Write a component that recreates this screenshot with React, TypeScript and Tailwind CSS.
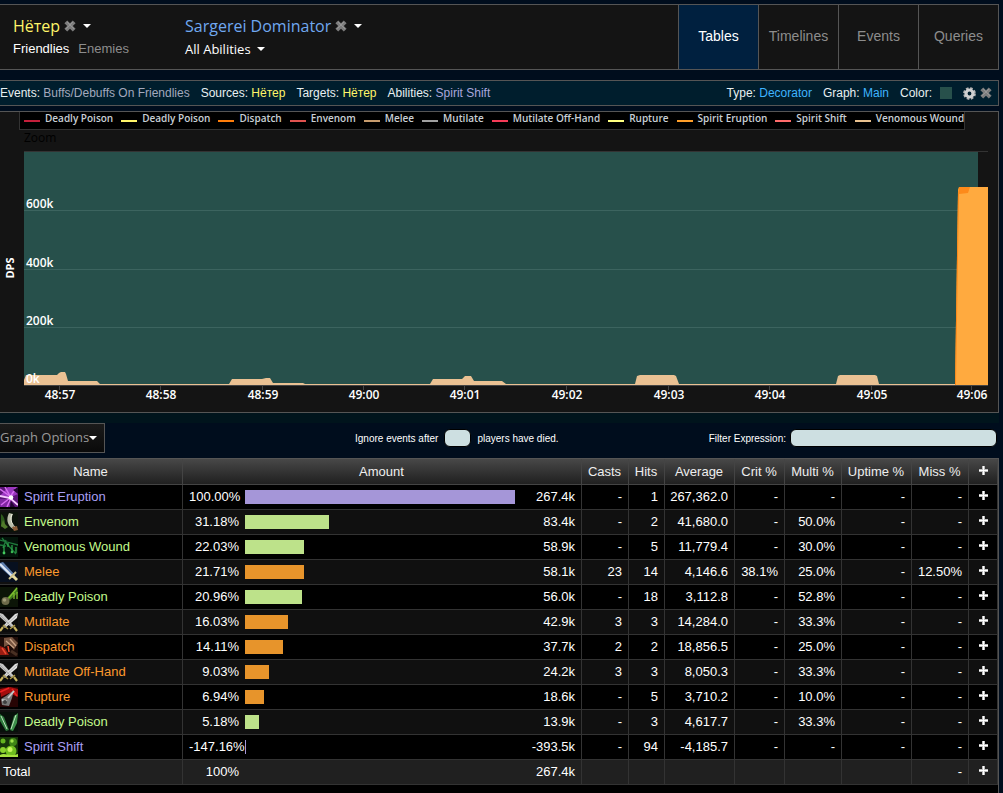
import type { ReactNode } from "react";
import clsx from "clsx";

type School = "shadow" | "nature" | "physical";

type AbilityRow = {
  name: string;
  icon: string;
  school: School;
  percent: string;
  share: number;
  amount: string;
  stats: string[];
};

const rows: AbilityRow[] = [
  { name: "Spirit Eruption", icon: "eruption", school: "shadow", percent: "100.00%", share: 100, amount: "267.4k", stats: ["-", "1", "267,362.0", "-", "-", "-", "-"] },
  { name: "Envenom", icon: "envenom", school: "nature", percent: "31.18%", share: 31.18, amount: "83.4k", stats: ["-", "2", "41,680.0", "-", "50.0%", "-", "-"] },
  { name: "Venomous Wound", icon: "wound", school: "nature", percent: "22.03%", share: 22.03, amount: "58.9k", stats: ["-", "5", "11,779.4", "-", "30.0%", "-", "-"] },
  { name: "Melee", icon: "melee", school: "physical", percent: "21.71%", share: 21.71, amount: "58.1k", stats: ["23", "14", "4,146.6", "38.1%", "25.0%", "-", "12.50%"] },
  { name: "Deadly Poison", icon: "poison", school: "nature", percent: "20.96%", share: 20.96, amount: "56.0k", stats: ["-", "18", "3,112.8", "-", "52.8%", "-", "-"] },
  { name: "Mutilate", icon: "blades", school: "physical", percent: "16.03%", share: 16.03, amount: "42.9k", stats: ["3", "3", "14,284.0", "-", "33.3%", "-", "-"] },
  { name: "Dispatch", icon: "dispatch", school: "physical", percent: "14.11%", share: 14.11, amount: "37.7k", stats: ["2", "2", "18,856.5", "-", "25.0%", "-", "-"] },
  { name: "Mutilate Off-Hand", icon: "blades", school: "physical", percent: "9.03%", share: 9.03, amount: "24.2k", stats: ["3", "3", "8,050.3", "-", "33.3%", "-", "-"] },
  { name: "Rupture", icon: "rupture", school: "physical", percent: "6.94%", share: 6.94, amount: "18.6k", stats: ["-", "5", "3,710.2", "-", "10.0%", "-", "-"] },
  { name: "Deadly Poison", icon: "daggers", school: "nature", percent: "5.18%", share: 5.18, amount: "13.9k", stats: ["-", "3", "4,617.7", "-", "33.3%", "-", "-"] },
  { name: "Spirit Shift", icon: "shift", school: "shadow", percent: "-147.16%", share: 0, amount: "-393.5k", stats: ["-", "94", "-4,185.7", "-", "-", "-", "-"] },
];

const totals = ["", "", "", "", "", "", "-"];

const textColor: Record<School, string> = {
  shadow: "text-[#a99ff4]",
  nature: "text-[#c3fa8c]",
  physical: "text-[#fb992e]",
};

const barColor: Record<School, string> = {
  shadow: "bg-[#a596d8]",
  nature: "bg-[#bde28a]",
  physical: "bg-[#e7942b]",
};

const legend = [
  { name: "Deadly Poison", color: "bg-[#c41f3b]" },
  { name: "Deadly Poison", color: "bg-[#fff569]" },
  { name: "Dispatch", color: "bg-[#ff7d0a]" },
  { name: "Envenom", color: "bg-[#e0524f]" },
  { name: "Melee", color: "bg-[#c79c6e]" },
  { name: "Mutilate", color: "bg-[#a0a0a0]" },
  { name: "Mutilate Off-Hand", color: "bg-[#f53b57]" },
  { name: "Rupture", color: "bg-[#ffff80]" },
  { name: "Spirit Eruption", color: "bg-[#ff9f2a]" },
  { name: "Spirit Shift", color: "bg-[#ff6b6b]" },
  { name: "Venomous Wound", color: "bg-[#eac18f]" },
];

const timeTicks = [
  { x: 60, label: "48:57" },
  { x: 161, label: "48:58" },
  { x: 263, label: "48:59" },
  { x: 364, label: "49:00" },
  { x: 465, label: "49:01" },
  { x: 567, label: "49:02" },
  { x: 669, label: "49:03" },
  { x: 770, label: "49:04" },
  { x: 872, label: "49:05" },
  { x: 972, label: "49:06" },
];

const valueTicks = [
  { y: 78, label: "600k" },
  { y: 137, label: "400k" },
  { y: 195, label: "200k" },
  { y: 253, label: "0k" },
];

const tabs = ["Tables", "Timelines", "Events", "Queries"];

function CloseIcon() {
  return (
    <svg width="12" height="12" viewBox="0 0 12 12" className="block">
      <path d="M3.2.4 6 3.2 8.800.4 11.600 3.200 8.800 6l2.800 2.800-2.800 2.800L6 8.800l-2.800 2.800L.4 8.800 3.200 6 .4 3.200z" fill="#7d7d7d" />
      <path d="M3.200 2 10 8.800M8.800 2 2 8.800" stroke="#9b9b9b" strokeWidth="1" />
    </svg>
  );
}

function GearIcon() {
  return (
    <svg width="13" height="13" viewBox="0 0 13 13" className="block">
      <circle cx="6.5" cy="6.5" r="5.200" fill="none" stroke="#b4b4b4" strokeWidth="2.400" strokeDasharray="2.500 1.584" />
      <circle cx="6.5" cy="6.5" r="3.500" fill="none" stroke="#cfcfcf" strokeWidth="3.200" />
    </svg>
  );
}

function Caret() {
  return (
    <svg width="8" height="4" viewBox="0 0 8 4" className="block">
      <path d="M0 0h8L4 4z" fill="#fff" />
    </svg>
  );
}

function PlusIcon() {
  return (
    <svg width="9" height="9" viewBox="0 0 9 9" className="block">
      <path d="M3 0h3v3h3v3H6v3H3V6H0V3h3z" fill="#bdbdbd" />
      <path d="M4 0h1v4h4v1H5v4H4V5H0V4h4z" fill="#fff" />
    </svg>
  );
}

const art: Record<string, ReactNode> = {
  eruption: (
    <>
      <rect width="18" height="20" fill="#5c1478" />
      <path d="M0 9 8 0h10v7L9 11z" fill="#9b37c0" />
      <path d="M0 12l7 0 4 8H0z" fill="#8026a2" />
      <path d="M0 2l11 8M5 0l5 9M16 1l-6 9M1 18l9-7M7 20l4-9" stroke="#d66cf0" strokeWidth="1.500" />
      <path d="M0 9l10 2 8 7" stroke="#f7c9ff" strokeWidth="1.800" fill="none" />
      <circle cx="11" cy="10.500" r="2.300" fill="#fff" />
      <path d="M13 3l5-3v7zM11 14l4 6h-5z" fill="#240434" />
    </>
  ),
  envenom: (
    <>
      <rect width="18" height="20" fill="#0b120a" />
      <path d="M1 2c3 2 4 6 4 10l-4 3z" fill="#2c5a1c" />
      <path d="M9 1C6 7 7 13 13 17l2-1C11 11 11 6 13 2z" fill="#b9bda9" />
      <path d="M12 2c-2 5-1 9 3 13" stroke="#efefdf" fill="none" />
      <path d="M3 8l2 4 3 3-3 2-4-3z" fill="#507a2b" />
      <path d="M12 15l5-1 1 4-4 1z" fill="#8a5b37" />
    </>
  ),
  wound: (
    <>
      <rect width="18" height="20" fill="#03140a" />
      <path d="M0 3l7 2 11 3M2 1l5 6 9 10M0 8l6 1M6 3l-3 8" stroke="#1f7a3b" strokeWidth="1.300" fill="none" />
      <path d="M4 9v7M12 8v7M8 6v4M16 10v6" stroke="#2fae4e" strokeWidth="1.200" />
      <circle cx="4" cy="16" r="1.400" fill="#45cc60" />
      <circle cx="12" cy="15" r="1.300" fill="#3ab552" />
    </>
  ),
  melee: (
    <>
      <rect width="18" height="20" fill="#07101f" />
      <path d="M0 1l3-1 12 13-3 3L0 5z" fill="#5f7fae" />
      <path d="M0 2l13 13" stroke="#dfe9f5" strokeWidth="2" />
      <path d="M9 17l7-7" stroke="#cfc38d" strokeWidth="2" />
      <path d="M13 14l4 4" stroke="#e7dc9e" strokeWidth="3" />
    </>
  ),
  poison: (
    <>
      <rect width="18" height="20" fill="#0c1507" />
      <path d="M17 0 7 11l3 2 8-7z" fill="#3f7a1c" />
      <path d="M17 1 8 12M14 6v6M17 5v7" stroke="#7dbb2f" strokeWidth="1.300" />
      <circle cx="5.500" cy="14" r="4" fill="#6d6a4a" />
      <circle cx="4.500" cy="13" r="1.800" fill="#a09b78" />
    </>
  ),
  blades: (
    <>
      <rect width="18" height="20" fill="#0b0b0b" />
      <path d="M0 1l3 1 11 12-2 2L0 5z" fill="#c4c4c4" />
      <path d="M18 1l-3 1L3 14l2 2L17 6z" fill="#dedede" />
      <path d="M0 3l12 12M17 3 4 15" stroke="#8d8d8d" strokeWidth=".6" />
      <path d="M10 17l5-4M8 17l-5-4" stroke="#a89448" strokeWidth="1.500" />
      <path d="M14 15l3 4M3 15l-3 4" stroke="#c9b45f" strokeWidth="2.200" />
    </>
  ),
  dispatch: (
    <>
      <rect width="18" height="20" fill="#1e0d09" />
      <path d="M4 1l8-1 6 6-4 7-4-6-6 3z" fill="#75533f" />
      <path d="M6 4l8 7M10 2l6 7" stroke="#c8a184" strokeWidth="1.300" />
      <path d="M0 9l5 2 4 7H0z" fill="#9b1c12" />
      <path d="M2 11l4 6M8 9l1 6" stroke="#eb4930" strokeWidth="1.500" />
      <path d="M11 14l6 4" stroke="#493023" strokeWidth="3" />
    </>
  ),
  rupture: (
    <>
      <rect width="18" height="20" fill="#270404" />
      <path d="M0 2l10-2 8 2v8L9 6 1 10z" fill="#a50d0d" />
      <path d="M0 5l9-4M12 2l5 7" stroke="#eb2222" strokeWidth="1.500" />
      <path d="M14 3 6 9l-5 3 1 6 7 1 3-8z" fill="#777" />
      <path d="M14 4 8 11M2 13l5 1" stroke="#c9c9c9" strokeWidth="1.800" />
      <circle cx="5" cy="15" r="2" fill="#3e3e3e" />
    </>
  ),
  daggers: (
    <>
      <rect width="18" height="20" fill="#07100a" />
      <path d="M0 2l4 3 5 13-3 1L0 9z" fill="#2f7a3d" />
      <path d="M18 1l-4 3-4 14 3 1 4-8z" fill="#3d8f4a" />
      <path d="M1 4l6 13M16 3l-5 14" stroke="#bfe5bd" strokeWidth="1" />
    </>
  ),
  shift: (
    <>
      <rect width="18" height="20" fill="#16350a" />
      <circle cx="13" cy="5" r="4" fill="#3f8616" />
      <circle cx="12" cy="4" r="1.700" fill="#a2e54a" />
      <circle cx="3" cy="4" r="2.500" fill="#63b31f" />
      <circle cx="11" cy="14" r="5.500" fill="#6fbe1f" />
      <circle cx="10" cy="12.500" r="2.500" fill="#c7f65e" />
      <circle cx="3" cy="13" r="3" fill="#8bd32e" />
      <path d="M0 18c5-3 9 2 18-1v3H0z" fill="#a8e23f" />
    </>
  ),
};

function AbilityIcon({ name }: { name: string }) {
  return (
    <svg width="18" height="20" viewBox="0 0 18 20" className="block shrink-0">
      {art[name]}
    </svg>
  );
}

function Header() {
  return (
    <header className="flex h-[66px] border border-l-0 border-[#555] bg-[#141414]">
      <div className="flex-1 flex pl-[13px]">
        <div className="w-[172px] pt-[9px]">
          <div className="flex items-center gap-[4px] h-[25px] pb-px font-['Open_Sans',sans-serif] text-[16px] text-[#fff569]">
            <a href="#source">Hётер</a>
            <button type="button" aria-label="Clear source">
              <CloseIcon />
            </button>
            <button type="button" aria-label="Choose source" className="ml-[3px]">
              <Caret />
            </button>
          </div>
          <nav className="flex gap-[9px] text-[13px] leading-[20px] text-[#8d8d8d]">
            <a href="#friendlies" className="text-white">Friendlies</a>
            <a href="#enemies">Enemies</a>
          </nav>
        </div>
        <div className="pt-[9px] font-['Open_Sans',sans-serif]">
          <div className="flex items-center gap-[4px] h-[25px] pb-px text-[16px] text-[#70a8f0]">
            <a href="#target">Sargerei Dominator</a>
            <button type="button" aria-label="Clear target">
              <CloseIcon />
            </button>
            <button type="button" aria-label="Choose target" className="ml-[3px]">
              <Caret />
            </button>
          </div>
          <button type="button" className="flex items-center gap-[6px] text-[13px] leading-[20px] text-white">
            All Abilities
            <Caret />
          </button>
        </div>
      </div>
      <nav className="flex text-[14px] text-[#8d8d8d]">
        {tabs.map((tab, i) => (
          <a
            key={tab}
            href={`#${tab.toLowerCase()}`}
            className={clsx(
              "w-[80px] flex items-center justify-center border-l border-[#555] pb-[2px]",
              i === 0 && "bg-[#00203f] text-white",
            )}
          >
            {tab}
          </a>
        ))}
      </nav>
    </header>
  );
}

function EventsBar() {
  return (
    <section className="mt-[10px] flex h-[26px] items-center justify-between border border-l-0 border-[#555] bg-[#001e2d] pr-[6px] text-[12px] text-[#e8f0f2]">
      <div className="flex gap-[11px]">
        <span>Events: <span className="text-[#a3a9bd]">Buffs/Debuffs On Friendlies</span></span>
        <span>Sources: <span className="text-[#fff569]">Hётер</span></span>
        <span>Targets: <span className="text-[#fff569]">Hётер</span></span>
        <span>Abilities: <span className="text-[#a9a6dc]">Spirit Shift</span></span>
      </div>
      <div className="flex items-center gap-[11px]">
        <span>Type: <a href="#type" className="text-[#3fb4ff]">Decorator</a></span>
        <span>Graph: <a href="#graph" className="text-[#3fb4ff]">Main</a></span>
        <span className="flex items-center gap-[8px]">
          Color:
          <button type="button" aria-label="Pick color" className="size-[12px] bg-[#27504b]" />
        </span>
        <span className="flex items-center gap-[4px]">
          <button type="button" aria-label="Settings"><GearIcon /></button>
          <button type="button" aria-label="Remove"><CloseIcon /></button>
        </span>
      </div>
    </section>
  );
}

function Chart() {
  return (
    <section className="mt-[5px] border border-l-0 border-[#555] bg-[#141414] font-['Open_Sans',sans-serif]">
      <ul className="ml-[19px] flex h-[18px] w-fit items-center gap-[8px] border border-t-0 border-[#333] bg-black pl-[4px] pb-[5px] text-[10px] leading-[12px] font-semibold whitespace-nowrap text-[#c9d0d6]">
        {legend.map((item, i) => (
          <li key={i} className="flex items-center gap-[5px]">
            <span className={clsx("mt-[5px] h-[2px] w-[16px]", item.color)} />
            {item.name}
          </li>
        ))}
      </ul>
      <svg viewBox="0 0 998 282" className="block w-full">
        <text x="24" y="12" fontSize="12" fill="#000">Zoom</text>
        <rect x="24" y="22" width="954" height="233" fill="#27504b" />
        <path d="M24 21.500h964" stroke="#333" />
        <path d="M24 80.500h954M24 139.500h954M24 197.500h954" stroke="#3c645f" />
        <path
          d="M24 255V250l2-5h31l2-2 2-1h4l1 2 2 7h29l3 3h129l3-5h30l4-1h4l3 5h30l2 1h125l3-5h29l3-3h6l3 5h28l4 3h129l2-8 3-1h34l2 1 3 8h157l2-8 2-1h35l2 1 2 8h109v1z"
          fill="#eac193"
        />
        <path d="M955 255l3-195 1-3h29v198z" fill="#ffaa3f" />
        <path d="M958 63l1-6h11l-2 6-9 1-3 191h-1z" fill="#fd8a1a" />
        <path d="M24 255.500h964" stroke="#444" />
        {timeTicks.map((tick) => (
          <g key={tick.label}>
            <path d={`M${tick.x - 0.5} 256v4`} stroke="#444" />
            <text x={tick.x} y="269" textAnchor="middle" fontSize="12" fontWeight="600" fill="#fff">{tick.label}</text>
          </g>
        ))}
        {valueTicks.map((tick) => (
          <text key={tick.label} x="26" y={tick.y} fontSize="12" fontWeight="600" fill="#fff">{tick.label}</text>
        ))}
        <text transform="translate(14 138) rotate(-90)" textAnchor="middle" fontSize="11" fontWeight="700" fill="#fff">DPS</text>
      </svg>
    </section>
  );
}

function Options() {
  return (
    <section className="border-t-[10px] border-[#00141c] flex items-center h-[45px] pb-[5px] text-[10px] text-white">
      <button
        type="button"
        className="flex h-[30px] w-[105px] items-center border border-l-0 border-[#555] bg-linear-to-b from-[#1b1b1b] to-[#0a0a0a] font-['Open_Sans',sans-serif] text-[13px] whitespace-nowrap text-[#9a9a9a]"
      >
        Graph Options
        <Caret />
      </button>
      <div className="ml-[250px] flex items-center gap-[6px] whitespace-nowrap">
        <label htmlFor="deaths">Ignore events after</label>
        <input id="deaths" className="h-[18px] w-[27px] rounded-[6px] border border-black bg-[#cddfe1] px-1 text-black" />
        <label htmlFor="deaths">players have died.</label>
      </div>
      <div className="ml-auto flex items-center gap-[4px] pr-[2px] whitespace-nowrap">
        <label htmlFor="filter">Filter Expression:</label>
        <input id="filter" className="h-[18px] w-[207px] rounded-[6px] border border-black bg-[#cddfe1] px-1 text-black" />
      </div>
    </section>
  );
}

function AmountCell({ row }: { row: { percent: string; share: number; amount: string; school?: School } }) {
  return (
    <div className="flex items-center gap-[6px]">
      <span className="w-[50px] text-right whitespace-nowrap">{row.percent}</span>
      <div className="flex-1">
        {row.school && (
          <div className={clsx("h-[14px] min-w-px", barColor[row.school])} style={{ width: `${row.share}%` }} />
        )}
      </div>
      <span className="w-[54px] text-right">{row.amount}</span>
    </div>
  );
}

function AddButton() {
  return (
    <button type="button" aria-label="Add filter" className="block mx-auto mb-[3px]">
      <PlusIcon />
    </button>
  );
}

const cell = "border-r border-b border-[#333] p-0";

function DamageTable() {
  return (
    <section className="flex-1 border-t border-r border-[#555] bg-black">
      <table className="w-full table-fixed border-separate border-spacing-0 text-[13px] leading-[20px] text-white">
        <colgroup>
          <col className="w-[183px]" />
          <col />
          <col className="w-[47px]" />
          <col className="w-[36px]" />
          <col className="w-[70px]" />
          <col className="w-[50px]" />
          <col className="w-[57px]" />
          <col className="w-[70px]" />
          <col className="w-[57px]" />
          <col className="w-[29px]" />
        </colgroup>
        <thead>
          <tr className="h-[26px] bg-linear-to-b from-[#484848] to-[#1f1f1f] text-[#eee]">
            {["Name", "Amount", "Casts", "Hits", "Average", "Crit %", "Multi %", "Uptime %", "Miss %"].map((h) => (
              <th key={h} className="border-r border-b border-[#444] p-0 pr-px font-normal whitespace-nowrap">{h}</th>
            ))}
            <th className="border-r border-b border-[#444] p-0"><AddButton /></th>
          </tr>
        </thead>
        <tbody>
          {rows.map((row, i) => (
            <tr key={i} className="h-[25px] odd:bg-black even:bg-[#101010]">
              <td className={cell}>
                <a href="#ability" className={clsx("flex items-center gap-[6px]", textColor[row.school])}>
                  <AbilityIcon name={row.icon} />
                  {row.name}
                </a>
              </td>
              <td className={clsx(cell, "px-[6px]")}><AmountCell row={row} /></td>
              {row.stats.map((value, j) => (
                <td key={j} className={clsx(cell, "pr-[6px] text-right")}>{value}</td>
              ))}
              <td className={cell}><AddButton /></td>
            </tr>
          ))}
        </tbody>
        <tfoot>
          <tr className="h-[25px] bg-[#202020]">
            <td className={clsx(cell, "pl-[3px]")}>Total</td>
            <td className={clsx(cell, "px-[6px]")}>
              <AmountCell row={{ percent: "100%", share: 0, amount: "267.4k" }} />
            </td>
            {totals.map((value, j) => (
              <td key={j} className={clsx(cell, "pr-[6px] text-right")}>{value}</td>
            ))}
            <td className={cell}><AddButton /></td>
          </tr>
        </tfoot>
      </table>
    </section>
  );
}

export default function App() {
  return (
    <main className="min-h-screen flex flex-col bg-[#000d1d] pt-[4px] pr-[4px] font-['Liberation_Sans',Arial,sans-serif]">
      <Header />
      <EventsBar />
      <Chart />
      <Options />
      <DamageTable />
    </main>
  );
}
